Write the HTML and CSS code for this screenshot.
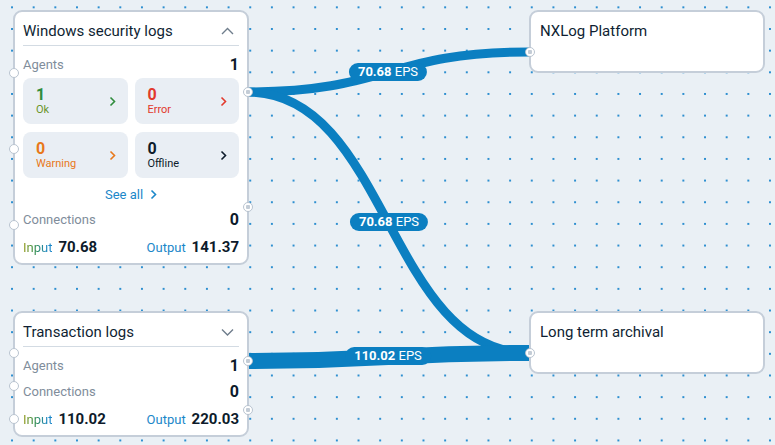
FILE: index.html
```html
<!DOCTYPE html>
<html lang="en">
<head>
    <meta charset="UTF-8">
    <meta name="viewport" content="width=device-width, initial-scale=1.0">
    <title>Pipeline</title>
    <link rel="stylesheet" href="styles.css">
</head>
<body>
    <div class="canvas">
        <svg class="edges" width="775" height="445" viewBox="0 0 775 445">
            <path d="M248 92 C388 92 388 52 529 52" stroke-width="9"/>
            <path d="M248 92 C388 92 388 353 529 353" stroke-width="9"/>
            <path d="M248 361 C388 361 388 353 529 353" stroke-width="16"/>
        </svg>

        <div class="edge-label label-top"><b>70.68</b> EPS</div>
        <div class="edge-label label-mid"><b>70.68</b> EPS</div>
        <div class="edge-label label-low"><b>110.02</b> EPS</div>

        <!-- source: windows -->
        <div class="node node-windows">
            <span class="handle h-in h-w1"></span>
            <span class="handle h-in h-w2"></span>
            <span class="handle h-in h-w3"></span>
            <span class="handle h-out h-w4"></span>
            <span class="handle h-out h-w5"></span>

            <div class="node-head">
                <span class="node-title">Windows security logs</span>
                <svg class="head-chevron" width="13" height="8" viewBox="0 0 13 8"><path d="M1 7 L6.5 1.5 L12 7"/></svg>
            </div>
            <div class="row row-agents">
                <span class="row-label">Agents</span>
                <span class="row-value">1</span>
            </div>
            <div class="tiles">
                <div class="tile">
                    <div>
                        <div class="tile-num ok">1</div>
                        <div class="tile-label ok-l">Ok</div>
                    </div>
                    <svg class="tile-chevron ok" width="7" height="11" viewBox="0 0 7 11"><path d="M1.5 1.5 L5.5 5.5 L1.5 9.5"/></svg>
                </div>
                <div class="tile">
                    <div>
                        <div class="tile-num err">0</div>
                        <div class="tile-label err">Error</div>
                    </div>
                    <svg class="tile-chevron err" width="7" height="11" viewBox="0 0 7 11"><path d="M1.5 1.5 L5.5 5.5 L1.5 9.5"/></svg>
                </div>
                <div class="tile">
                    <div>
                        <div class="tile-num warn">0</div>
                        <div class="tile-label warn">Warning</div>
                    </div>
                    <svg class="tile-chevron warn" width="7" height="11" viewBox="0 0 7 11"><path d="M1.5 1.5 L5.5 5.5 L1.5 9.5"/></svg>
                </div>
                <div class="tile">
                    <div>
                        <div class="tile-num off">0</div>
                        <div class="tile-label off">Offline</div>
                    </div>
                    <svg class="tile-chevron off" width="7" height="11" viewBox="0 0 7 11"><path d="M1.5 1.5 L5.5 5.5 L1.5 9.5"/></svg>
                </div>
            </div>
            <div class="see-all">
                <span>See all</span>
                <svg width="7" height="11" viewBox="0 0 7 11"><path d="M1.5 1.5 L5.5 5.5 L1.5 9.5"/></svg>
            </div>
            <div class="row row-conn">
                <span class="row-label">Connections</span>
                <span class="row-value">0</span>
            </div>
            <div class="row row-io">
                <span><span class="in-label">Input</span> <b class="io-value">70.68</b></span>
                <span><span class="out-label">Output</span> <b class="io-value">141.37</b></span>
            </div>
        </div>

        <!-- source: transactions -->
        <div class="node node-trans">
            <span class="handle h-in h-t1"></span>
            <span class="handle h-in h-t2"></span>
            <span class="handle h-in h-t3"></span>
            <span class="handle h-out h-t4"></span>
            <span class="handle h-out h-t5"></span>

            <div class="node-head">
                <span class="node-title">Transaction logs</span>
                <svg class="head-chevron" width="13" height="8" viewBox="0 0 13 8"><path d="M1 1.5 L6.5 7 L12 1.5"/></svg>
            </div>
            <div class="row row-agents">
                <span class="row-label">Agents</span>
                <span class="row-value">1</span>
            </div>
            <div class="row row-conn-t">
                <span class="row-label">Connections</span>
                <span class="row-value">0</span>
            </div>
            <div class="row row-io">
                <span><span class="in-label">Input</span> <b class="io-value">110.02</b></span>
                <span><span class="out-label">Output</span> <b class="io-value">220.03</b></span>
            </div>
        </div>

        <!-- destinations -->
        <div class="node node-dest node-nxlog">
            <span class="handle h-out h-d"></span>
            <div class="dest-title">NXLog Platform</div>
        </div>
        <div class="node node-dest node-archive">
            <span class="handle h-out h-d"></span>
            <div class="dest-title">Long term archival</div>
        </div>
    </div>
</body>
</html>
```

FILE: styles.css
```css
body {
    margin: 0;
    font-family: Roboto, "Liberation Sans", sans-serif;
    background-color: #eaf0f5;
}
.canvas {
    position: relative;
    width: 775px;
    height: 445px;
    overflow: hidden;
    background-color: #eaf0f5;
    background-image: radial-gradient(circle, #2d8fd0 0.9px, transparent 1.4px);
    background-size: 21.67px 21.67px;
    background-position: 1.2px -3.5px;
}
.edges {
    position: absolute;
    left: 0;
    top: 0;
}
.edges path {
    fill: none;
    stroke: #0b7fc1;
}
.edge-label {
    position: absolute;
    transform: translate(-50%, -50%);
    background: #0b7fc1;
    color: #fff;
    font-size: 13px;
    height: 18px;
    line-height: 18px;
    padding: 0 9px;
    border-radius: 9px;
    white-space: nowrap;
}
.label-top { left: 388px; top: 72px; }
.label-mid { left: 389px; top: 222px; }
.label-low { left: 388px; top: 356px; }

.node {
    position: absolute;
    width: 236px;
    box-sizing: border-box;
    background: #fff;
    border: 2px solid #c5ced9;
    border-radius: 9px;
    padding: 0 8px;
}
.node-windows { left: 13px; top: 10px; height: 255px; }
.node-trans { left: 13px; top: 311px; height: 126px; }
.node-nxlog { left: 529px; top: 10px; height: 63px; }
.node-archive { left: 529px; top: 311px; height: 63px; }
.node-dest { padding: 0 9px; }

.handle {
    position: absolute;
    width: 10px;
    height: 10px;
    box-sizing: border-box;
    border-radius: 50%;
    border: 1.5px solid #b9c4d0;
    background: #fff;
}
.h-in { left: -6px; }
.h-out {
    right: -6px;
    background: radial-gradient(circle, #c3ccd6 2px, #fff 2.5px);
}
.node-dest .h-out { right: auto; left: -6px; }
.h-w1 { top: 56px; }
.h-w2 { top: 132px; }
.h-w3 { top: 208px; }
.h-w4 { top: 75px; }
.h-w5 { top: 190px; }
.h-t1 { top: 35px; }
.h-t2 { top: 68px; }
.h-t3 { top: 101px; }
.h-t4 { top: 43px; }
.h-t5 { top: 92px; }
.h-d { top: 35px; }

.node-head {
    display: flex;
    justify-content: space-between;
    align-items: center;
    height: 28px;
    padding-top: 5px;
    border-bottom: 1px solid #d3dbe3;
}
.node-title, .dest-title {
    font-size: 15px;
    color: #0f1f33;
}
.dest-title {
    line-height: 28px;
    padding-top: 5px;
}
.head-chevron {
    margin-right: 5px;
}
.head-chevron path {
    fill: none;
    stroke: #6f7d8c;
    stroke-width: 1.4;
}

.row {
    display: flex;
    justify-content: space-between;
    align-items: center;
    height: 18px;
}
.row-agents { margin-top: 9px; }
.row-conn { margin-top: 7px; }
.row-conn-t { margin-top: 8px; }
.row-io { margin-top: 8px; height: 20px; }
.row-label {
    font-size: 13px;
    color: #808d9b;
}
.row-value {
    font-size: 16px;
    font-weight: bold;
    color: #0d1b2b;
}
.in-label {
    font-size: 13px;
    background: linear-gradient(90deg, #9a9b1c, #3a8f3e 35%, #1b87c9 85%);
    -webkit-background-clip: text;
    background-clip: text;
    color: transparent;
}
.out-label {
    font-size: 13px;
    color: #1b87c9;
}
.io-value {
    font-size: 15px;
    color: #0d1b2b;
    margin-left: 2px;
}

.tiles {
    display: grid;
    grid-template-columns: 1fr 1fr;
    gap: 8px 7px;
    margin-top: 5px;
}
.tile {
    display: flex;
    justify-content: space-between;
    align-items: center;
    height: 46px;
    background: #e9eef4;
    border-radius: 8px;
    padding: 0 12px 0 13px;
}
.tile-num {
    font-size: 16px;
    font-weight: bold;
    line-height: 17px;
}
.tile-label {
    font-size: 11px;
    line-height: 13px;
}
.tile-chevron path {
    fill: none;
    stroke: currentColor;
    stroke-width: 1.6;
}
.ok { color: #2f8c3c; }
.ok-l { color: #6a9428; }
.err { color: #e2392c; }
.warn { color: #e8781a; }
.off { color: #0d1b2b; }

.see-all {
    display: flex;
    justify-content: center;
    align-items: center;
    gap: 7px;
    height: 18px;
    margin-top: 7px;
    font-size: 13px;
    color: #1b87c9;
}
.see-all path {
    fill: none;
    stroke: #1b87c9;
    stroke-width: 1.6;
}
```
